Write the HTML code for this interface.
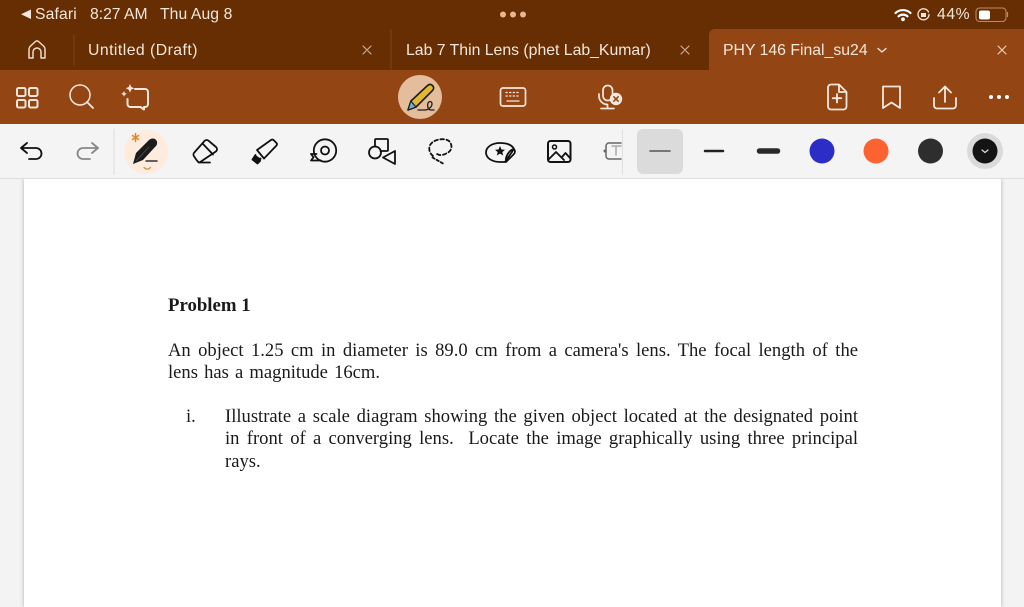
<!DOCTYPE html>
<html><head><meta charset="utf-8"><style>
html,body{margin:0;padding:0;width:1024px;height:607px;overflow:hidden;background:#f3f3f3}
div{position:absolute;white-space:nowrap}
.u{font-family:"Liberation Sans",sans-serif;color:#f3e6da;font-size:15.8px;line-height:18px}
.s{font-size:15.7px}
.d{font-family:"Liberation Serif",serif;color:#1a1a1a;font-size:18.6px;line-height:22px;text-align:justify;text-align-last:justify;white-space:nowrap}
svg{position:absolute;left:0;top:0}
</style></head><body>
<div style="left:0;top:0;width:1024px;height:70px;background:#662e02"></div>
<div style="left:0;top:70px;width:1024px;height:54px;background:#934613"></div>
<div style="left:709px;top:29px;width:315px;height:45px;background:#934613;border-radius:6px 0 0 0"></div>
<div style="left:24px;top:179px;width:977px;height:428px;background:#fff;box-shadow:0 0 4px rgba(0,0,0,.28)"></div>
<div style="left:0;top:124px;width:1024px;height:54px;background:#f4f4f4;border-bottom:1px solid #dcdde0"></div>
<div style="left:637px;top:129px;width:46px;height:45px;background:#dcdbdb;border-radius:6px"></div>
<div style="left:124px;top:130px;width:44px;height:44px;background:#fdebdd;border-radius:50%"></div>
<div style="left:398px;top:75px;width:44px;height:44px;background:#e4bd9c;border-radius:50%"></div>
<div style="left:967px;top:133px;width:36px;height:36px;background:#dadada;border-radius:50%"></div>

<div class="u s" style="left:35px;top:6px;letter-spacing:.15px">Safari</div>
<div class="u s" style="left:90px;top:6px">8:27 AM</div>
<div class="u s" style="left:160px;top:6px;letter-spacing:.1px">Thu Aug 8</div>
<div class="u s" style="left:937px;top:6px;letter-spacing:.6px">44%</div>
<div class="u" style="left:88px;top:42px;letter-spacing:.45px">Untitled (Draft)</div>
<div class="u" style="left:406px;top:42px">Lab 7 Thin Lens (phet Lab_Kumar)</div>
<div class="u" style="left:723px;top:42px">PHY 146 Final_su24</div>

<div class="d" style="left:168px;top:295px;font-weight:bold;font-size:18.8px;text-align-last:left">Problem 1</div>
<div class="d" style="left:168px;top:340px;width:690px">An object 1.25 cm in diameter is 89.0 cm from a camera's lens. The focal length of the</div>
<div class="d" style="left:168px;top:362px;text-align-last:left;word-spacing:1.5px">lens has a magnitude 16cm.</div>
<div class="d" style="left:186px;top:406px;text-align-last:left">i.</div>
<div class="d" style="left:225px;top:406px;width:633px">Illustrate a scale diagram showing the given object located at the designated point</div>
<div class="d" style="left:225px;top:428px;width:633px">in front of a converging lens.&nbsp; Locate the image graphically using three principal</div>
<div class="d" style="left:225px;top:451px;text-align-last:left">rays.</div>

<svg width="1024" height="607" viewBox="0 0 1024 607" fill="none" stroke-linecap="round" stroke-linejoin="round">
<!-- status -->
<path d="M31 9.500V19L21 14.200Z" fill="#f3e6da"/>
<g fill="#e9b690"><circle cx="503" cy="14.500" r="3"/><circle cx="513" cy="14.500" r="3"/><circle cx="523" cy="14.500" r="3"/></g>
<g stroke="#fff" stroke-width="2.200"><path d="M895.500 13a11 11 0 0 1 15 0"/><path d="M898.500 16.300a7 7 0 0 1 9 0"/></g><circle cx="903" cy="19.300" r="1.900" fill="#fff"/>
<path d="M928.500 12a5.500 5.500 0 1 0 .5 2.500" stroke="#f3e6da" stroke-width="1.300"/><rect x="921" y="13" width="5" height="4" fill="#f3e6da"/>
<rect x="976" y="8" width="30" height="13.500" rx="3.500" stroke="#b98d6c" stroke-width="1"/><rect x="979" y="10.500" width="11" height="9" rx="2" fill="#fff"/><path d="M1007.500 12.500v4" stroke="#b98d6c" stroke-width="1.200"/>
<!-- tab bar -->
<path d="M29 58v-9c0-1 .5-2 1.500-3l5-4.500a2 2 0 0 1 3 0l5 4.500c1 1 1.500 2 1.500 3v9h-4v-6a3.500 3.500 0 0 0-8 0v6z" stroke="#f0dccb" stroke-width="1.500"/>
<path d="M74 35v30M391 30v40" stroke="#7d4517" stroke-width="1"/>
<g stroke="#c9ad96" stroke-width="1.200"><path d="M363 46l8 8M371 46l-8 8M681 46l8 8M689 46l-8 8"/></g>
<path d="M878 48.500l4 3.500 4-3.500" stroke="#f3e6da" stroke-width="1.300"/>
<path d="M998 46l8 8M1006 46l-8 8" stroke="#e6cdb8" stroke-width="1.200"/>
<!-- toolbar 2 -->
<g stroke="#f3e6da" stroke-width="2"><rect x="17" y="88" width="8.500" height="8" rx="1.500"/><rect x="29" y="88" width="8.500" height="8" rx="1.500"/><rect x="17" y="100" width="8.500" height="7.500" rx="1.500"/><rect x="29" y="100" width="8.500" height="7.500" rx="1.500"/></g>
<circle cx="80" cy="95" r="10" stroke="#f6e8dc" stroke-width="1.500"/><path d="M87 102l6 6" stroke="#f6e8dc" stroke-width="1.800"/>
<path d="M135 89h10a3 3 0 0 1 3 3v12a3 3 0 0 1-3 3h-1v2.500l-3.500-2.500h-10a3 3 0 0 1-3-3v-5" stroke="#f6e8dc" stroke-width="2"/>
<path d="M130 84l1.300 3 3 1.300-3 1.300-1.300 3-1.300-3-3-1.300 3-1.300zM124 91l.9 2 2 .9-2 .9-.9 2-.9-2-2-.9 2-.9z" fill="#f6e8dc"/>
<!-- pencil -->
<path d="M408 110l3-9 16-15c2-2 4-2 5.500-.5s1.500 3.500 0 5L416 107z" fill="#e3b92f" stroke="#1d1d1d" stroke-width="1.600"/>
<path d="M408 110l2.800-9 5.200 6z" fill="#6db1d6" stroke="#1d1d1d" stroke-width="1.200"/>
<path d="M418 110h7c3 0 7-3 7-6s-3-3-4-1c-1 3 0 7 3 7h3" stroke="#1d1d1d" stroke-width="1.300"/>
<!-- keyboard -->
<rect x="500.500" y="88" width="25" height="18" rx="2.500" stroke="#f6e8dc" stroke-width="1.700"/>
<path d="M506 92.500h14M506 96h14" stroke="#f6e8dc" stroke-width="1.200" stroke-dasharray="1.300 2.300"/><path d="M507 101h12" stroke="#f6e8dc" stroke-width="1.300"/>
<!-- mic -->
<rect x="603" y="85.500" width="9.500" height="15" rx="4.700" stroke="#f6e8dc" stroke-width="1.700"/>
<path d="M599 94v2a8.500 8.500 0 0 0 8.500 8.500V108.500M601 108.500h13" stroke="#f6e8dc" stroke-width="1.700"/>
<circle cx="616" cy="99" r="6.200" fill="#f6e8dc"/><path d="M613.800 96.800l4.400 4.400M618.200 96.800l-4.400 4.400" stroke="#934613" stroke-width="1.500"/>
<!-- right icons -->
<path d="M831 84.500h8l7.500 7.500v14.500a3 3 0 0 1-3 3H831a3 3 0 0 1-3-3V87.500a3 3 0 0 1 3-3zM839 85v7h7" stroke="#f6e8dc" stroke-width="1.800"/><path d="M837 94v8.500M832.800 98.200h8.500" stroke="#f6e8dc" stroke-width="1.800"/>
<path d="M883 86.500h17V108l-8.500-5.500L883 108z" stroke="#f6e8dc" stroke-width="1.800"/>
<path d="M945 102V87M939 92.500l6-6 6 6M934 98v7.500a3 3 0 0 0 3 3h16a3 3 0 0 0 3-3V98" stroke="#f6e8dc" stroke-width="1.800"/>
<g fill="#fff"><circle cx="991" cy="97" r="2"/><circle cx="999" cy="97" r="2"/><circle cx="1007" cy="97" r="2"/></g>
<!-- tools -->
<g stroke="#111" stroke-width="1.800">
<path d="M27 143l-6 5 6 5M21 148h15a5.500 5.500 0 0 1 0 11h-7"/>
<path d="M92 143l6 5-6 5M98 148H83a5.500 5.500 0 0 0 0 11h7" stroke="#888"/>
<path d="M114 129v45" stroke="#dcdcdc" stroke-width="1"/>
<!-- eraser -->
<path d="M204.500 141a3 3 0 0 1 4-.3l7.500 6.300a3 3 0 0 1 .2 4.300L201 161.500a3 3 0 0 1-2.500.8l-2.500-3-2-3a3 3 0 0 1 .3-3.800zM203 144l10 10.500M198.500 162.500H210"/>
<!-- highlighter -->
<path d="M257 150l14-10c1-.7 1.800-.6 2.500 0l3 3c.7.800.7 1.500 0 2.500L264 158.500zM257 150l7 8.500"/>
<path d="M255.500 155l-3 4.500 5 4 2.500-2.500 .5-2.500" fill="#111"/>
<!-- tape -->
<circle cx="325" cy="150.500" r="11.200"/><circle cx="325" cy="150.500" r="4"/><path d="M321 160.500h-10l2.500-3.200-2.500-3.300h5.500"/>
<!-- shapes -->
<circle cx="375" cy="152.500" r="6"/><path d="M375 146.500V140a1 1 0 0 1 1-1h11a1 1 0 0 1 1 1v10a1 1 0 0 1-1 1h-6.500"/><path d="M395 151v13l-12-6.500z"/>
<!-- lasso -->
<path d="M433 156c-5-4-5-11 0-14 4-3 12-4 16-1 4 4 3 10-2 12-3 2-7 3-10 1" stroke-dasharray="3.500 2.600"/><path d="M432.500 157.500l10.500 6" stroke-dasharray="2.500 2.200"/>
<!-- sticker -->
<path d="M514 149c-2-4-7-6-14-6-8 0-14 4-14 9.500s6 9.500 14 9.500h5zM514 149c1.500 2 1.500 3.500-.5 5.500l-7.500 7.500c-1-5 3-12 8-13z"/>
<path d="M500 146l1.500 3.500 3.500.3-2.700 2.300.9 3.400-3.200-1.900-3.200 1.900.9-3.400-2.700-2.300 3.500-.3z" fill="#111" stroke="none"/>
<!-- image -->
<rect x="548" y="141" width="22.500" height="21" rx="2.500" stroke-width="2"/><circle cx="554.500" cy="147" r="2" stroke-width="1.500"/><path d="M549 159l7-7 8 8M562 157l3.500-4 4.500 5"/>
</g>
<!-- text tool fade -->
<path d="M621 143h-12a3 3 0 0 0-3 3v10a3 3 0 0 0 3 3h12" stroke="#666" stroke-width="1.500"/>
<circle cx="605" cy="151" r="1.500" fill="#666"/><path d="M612 146h9M616 146v9" stroke="#aaa" stroke-width="1.500"/>
<path d="M622.500 130v44" stroke="#e0e0e0" stroke-width="1"/>
<!-- active pen -->
<path d="M133 164l3-11 13-13c2-2 6-2 7 0 2 2 1 5 0 6l-1 1-12 13z" fill="#1b1b1b"/><path d="M136 161l13-14" stroke="#555" stroke-width=".7"/>
<path d="M146 161h11" stroke="#333" stroke-width="1.500"/>
<path d="M144 167.500l2 1.500h2.500l2-1.500" stroke="#d8893a" stroke-width="1.300"/>
<path d="M135.500 133.500v8M132.500 135.500l6 4M138.500 135.500l-6 4" stroke="#dc8a2c" stroke-width="1.500"/>
<!-- lines -->
<path d="M650 151h20" stroke="#555" stroke-width="1.600"/>
<path d="M705 151h18" stroke="#222" stroke-width="2.500"/>
<path d="M759.500 151h18" stroke="#2a2a2a" stroke-width="5.500"/>
<circle cx="822" cy="151" r="12.500" fill="#2b2dc6"/>
<circle cx="876" cy="151" r="12.500" fill="#fd6330"/>
<circle cx="930.500" cy="151" r="12.500" fill="#2e2e2e"/>
<circle cx="985" cy="151" r="12.500" fill="#141414"/>
<path d="M982 150l3 2.500 3-2.500" stroke="#ddd" stroke-width="1.200"/>
</svg>
</body></html>
